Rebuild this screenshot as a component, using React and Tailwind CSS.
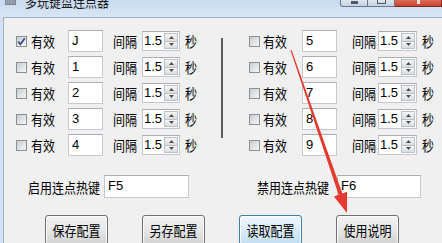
import React from 'react'

const cjk = "font-['Microsoft_YaHei','Noto_Sans_CJK_SC',sans-serif]"
const latin = "font-['Liberation_Sans',Arial,sans-serif]"

function Label({ children, className = '' }) {
  return (
    <span className={`inline-block shrink-0 scale-y-[1.15] whitespace-nowrap text-[12px] leading-[14px] ${className}`}>
      {children}
    </span>
  )
}

function Check({ checked }) {
  return (
    <span className="flex h-[11px] w-[11px] shrink-0 items-center justify-center border border-[#8e8f8f] bg-white">
      <span className="relative flex h-[9px] w-[9px] items-center justify-center bg-linear-to-br from-[#c9ccd1] to-[#f7f7f7]">
        {checked && (
          <svg width="9" height="9" viewBox="0 0 9 9" className="absolute inset-0">
            <path d="M1.3 4.6 L3.4 7.2 L7.8 1.2" fill="none" stroke="#3d5083" strokeWidth="1.8" />
          </svg>
        )}
      </span>
    </span>
  )
}

function TextBox({ value, className = '' }) {
  return (
    <div className={`h-[22px] shrink-0 border border-[#c6c9cf] border-t-[#abadb3] bg-white pl-[3px] pt-[2px] text-[13px] leading-[15px] ${latin} ${className}`}>
      {value}
    </div>
  )
}

function Arrow({ up }) {
  return (
    <svg width="5" height="3" viewBox="0 0 5 3">
      <path d={up ? 'M0 3 L2.5 0 L5 3Z' : 'M0 0 L2.5 3 L5 0Z'} fill="#4f4f4f" />
    </svg>
  )
}

function Spin({ className = '' }) {
  return (
    <div className={`flex h-[20px] shrink-0 border border-[#c3c6cc] border-t-[#abadb3] bg-white ${className}`}>
      <span className={`flex-1 pl-[1px] text-[13px] leading-[18px] ${latin}`}>1.5</span>
      <div className="flex w-[15px] flex-col py-[1px] pr-[1px]">
        <span className="flex flex-1 items-center justify-center border border-[#b9c1cb] bg-linear-to-b from-[#f6f6f6] to-[#dcdcdc]">
          <Arrow up />
        </span>
        <span className="flex flex-1 items-center justify-center border border-t-0 border-[#b9c1cb] bg-linear-to-b from-[#f6f6f6] to-[#dcdcdc]">
          <Arrow />
        </span>
      </div>
    </div>
  )
}

function LeftRow({ checked, value }) {
  return (
    <div className="flex h-[26px] items-center">
      <Check checked={checked} />
      <Label className="ml-[4px]">有效</Label>
      <TextBox value={value} className="ml-[13px] w-[35px]" />
      <Label className="ml-[10px]">间隔</Label>
      <Spin className="ml-[5px] w-[38px]" />
      <Label className="ml-[5px]">秒</Label>
    </div>
  )
}

function RightRow({ value }) {
  return (
    <div className="flex h-[26px] items-center">
      <Check />
      <Label className="ml-[3px]">有效</Label>
      <TextBox value={value} className="ml-[15px] w-[35px]" />
      <Label className="ml-[15px]">间隔</Label>
      <Spin className="ml-[2px] w-[39px]" />
      <Label className="ml-[5px]">秒</Label>
    </div>
  )
}

function Btn({ children, focused }) {
  return (
    <div
      className={`flex h-[30px] w-[63px] shrink-0 items-center justify-center rounded-[3px] border shadow-[inset_0_0_0_1px_#fbfbfb] ${
        focused
          ? 'border-[#3c7fb1] bg-linear-to-b from-[#eef7fd] via-[#dcebf7] to-[#c3def2]'
          : 'border-[#707070] bg-linear-to-b from-[#f3f3f3] via-[#e7e7e7] to-[#d2d2d2]'
      }`}
    >
      <Label>{children}</Label>
    </div>
  )
}

function TitleBar() {
  return (
    <div className="flex h-[17px] items-start bg-linear-to-b from-[#c9dbf0] to-[#d8e5f4]">
      <svg width="11" height="6" viewBox="0 0 11 6" className="ml-[5px]">
        <rect x="0" y="0" width="11" height="5" fill="#7c8796" />
        <path d="M1 1 H10 M1 3 H10" stroke="#e4e8ee" strokeWidth="0.8" strokeDasharray="1 0.7" />
      </svg>
      <span className="-mt-[5px] ml-[9px] text-[12px] leading-[12px] text-[#1b1b1b] scale-y-[1.15]">多玩键盘连点器</span>
      <div className="ml-auto flex h-[7px]">
        <div className="flex w-[28px] justify-center rounded-bl-[3px] border border-t-0 border-[#6a7a92] bg-linear-to-b from-[#dfe6ef] to-[#c5d1e0]">
          <span className="mt-[1px] h-[3px] w-[7px] bg-[#4d586a]" />
        </div>
        <div className="flex w-[27px] justify-center border border-t-0 border-l-0 border-[#6a7a92] bg-linear-to-b from-[#dfe6ef] to-[#c5d1e0]">
          <span className="h-[4px] w-[9px] border border-t-0 border-[#4d586a]" />
        </div>
        <div className="flex w-[47px] justify-center border border-t-0 border-l-0 border-[#7a2b22] bg-linear-to-b from-[#e06a52] to-[#c6452f]">
          <span className="h-[4px] w-[3px] bg-[#f6e4df]" />
        </div>
      </div>
    </div>
  )
}

export default function App() {
  return (
    <div className={`relative h-[243px] w-[442px] overflow-hidden bg-[#d3e1f2] text-black ${cjk}`}>
      <TitleBar />
      <div className="ml-[3px] h-[226px] border-l border-t border-[#9cb0c8] bg-[#f0f0f0]">
        <div className="flex pt-[10px]">
          <div className="ml-[12px] flex w-[205px] flex-col">
            <LeftRow checked value="J" />
            <LeftRow value="1" />
            <LeftRow value="2" />
            <LeftRow value="3" />
            <LeftRow value="4" />
          </div>
          <div className="mt-[10px] h-[100px] w-[2px] bg-[#5c5c5c]" />
          <div className="ml-[26px] flex flex-col">
            <RightRow value="5" />
            <RightRow value="6" />
            <RightRow value="7" />
            <RightRow value="8" />
            <RightRow value="9" />
          </div>
        </div>

        <div className="mt-[17px] flex items-center">
          <Label className="ml-[24px] w-[72px]">启用连点热键</Label>
          <TextBox value="F5" className="ml-[4px] h-[23px] w-[85px]" />
          <Label className="ml-[68px] w-[72px]">禁用连点热键</Label>
          <TextBox value="F6" className="ml-[8px] h-[23px] w-[84px]" />
        </div>

        <div className="mt-[17px] flex gap-[34px] pl-[41px]">
          <Btn>保存配置</Btn>
          <Btn>另存配置</Btn>
          <Btn focused>读取配置</Btn>
          <Btn>使用说明</Btn>
        </div>
      </div>

      <svg width="442" height="243" viewBox="0 0 442 243" className="pointer-events-none absolute inset-0">
        <polygon
          points="291.5,49.8 342.4,193.5 347.1,191.8 347,213 333.9,196.4 338.6,194.8 290.5,50.2"
          fill="#e53a2f"
        />
      </svg>
    </div>
  )
}
